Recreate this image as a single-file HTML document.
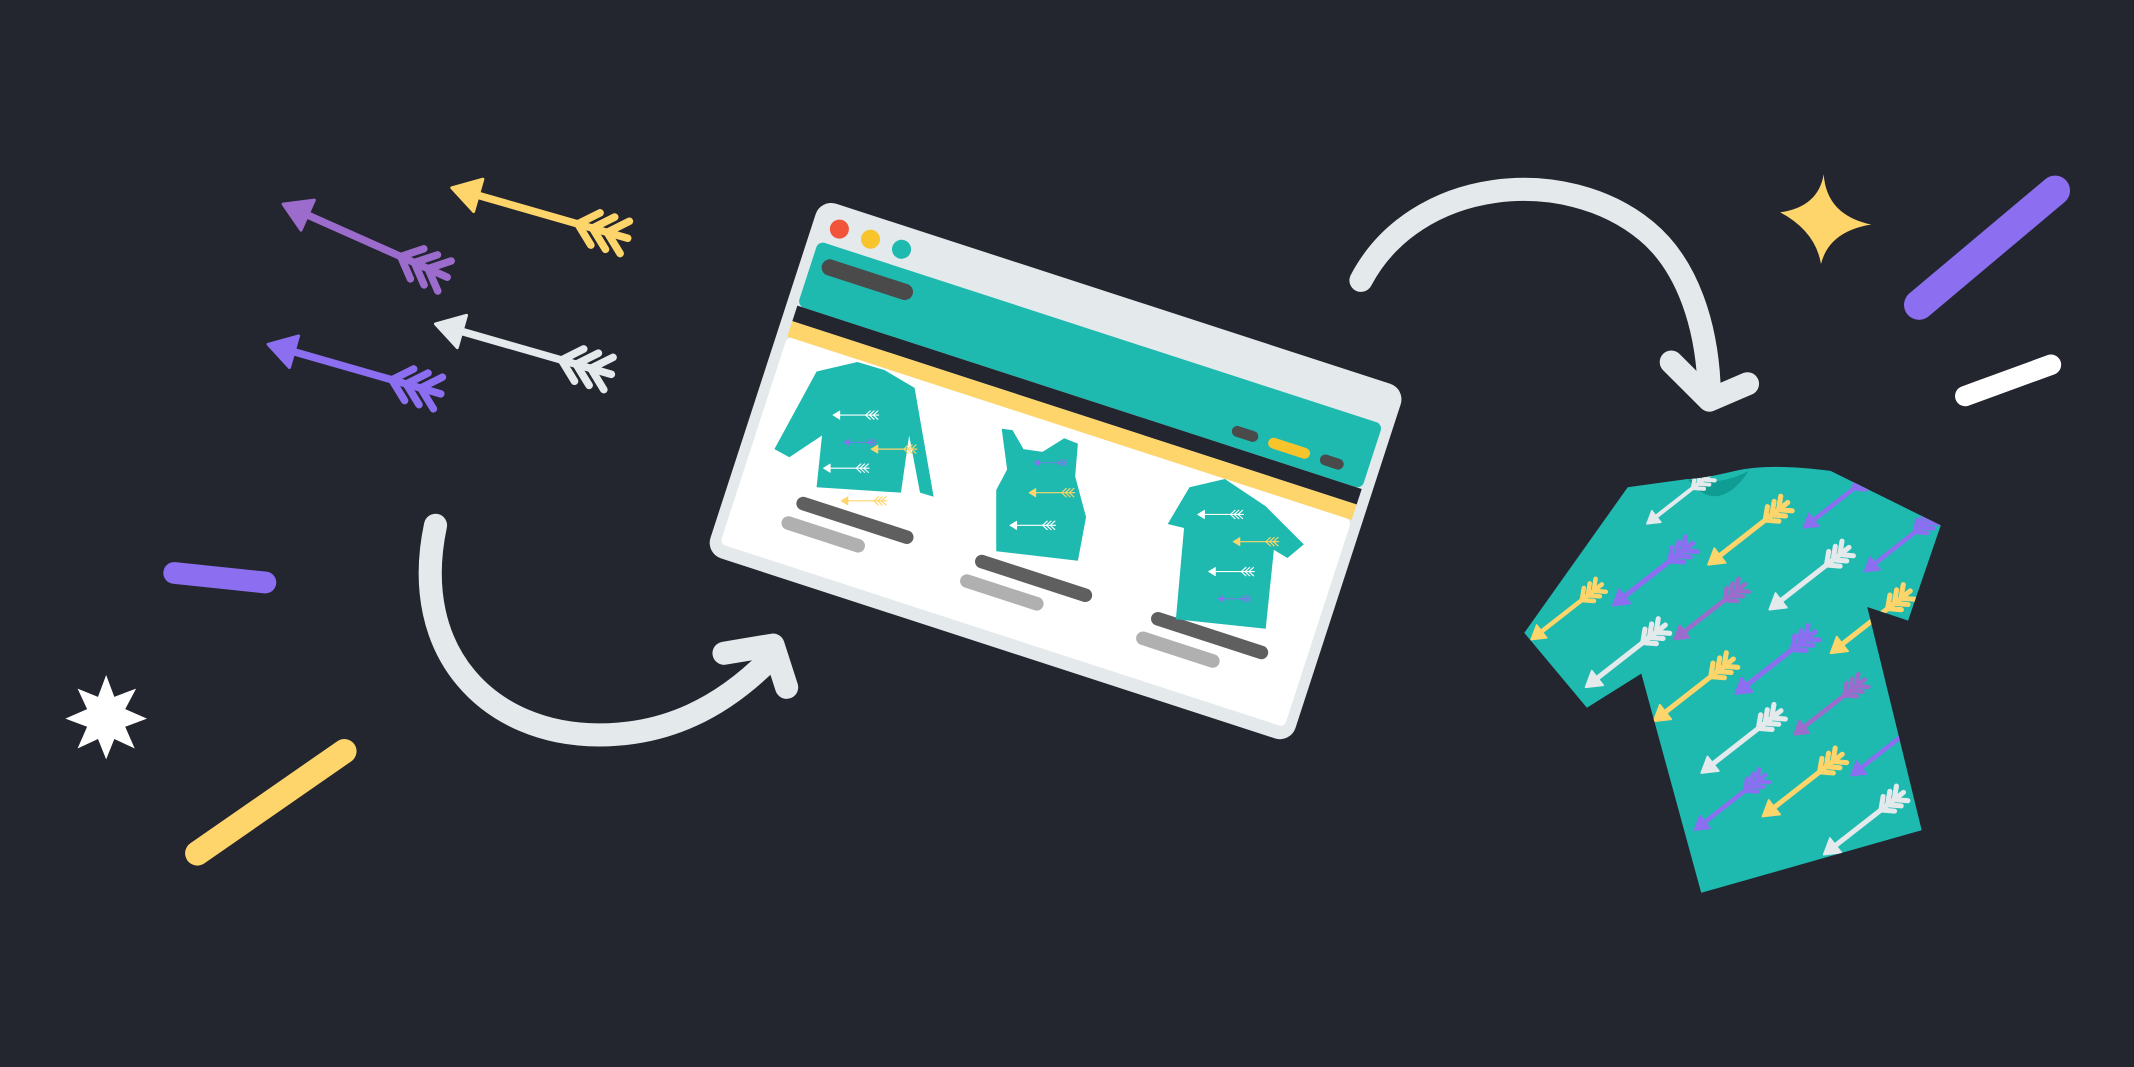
<!DOCTYPE html>
<html><head><meta charset="utf-8"><style>
html,body{margin:0;padding:0;background:#23252f;overflow:hidden}
svg{display:block}
</style></head><body>
<svg width="2134" height="1067" viewBox="0 0 1568 784" xmlns="http://www.w3.org/2000/svg">
<defs>
<g id="ar" stroke-linecap="round" stroke-linejoin="round">
<line x1="4" y1="0" x2="120" y2="0" fill="none"/>
<path d="M18,-11 L0,0 L18,11 Z" stroke-width="2"/>
<path fill="none" d="M86,0 L98,-11 M86,0 L98,11 M96,0 L108,-11 M96,0 L108,11 M106,0 L118,-11 M106,0 L118,11"/>
</g>
<clipPath id="tee"><path d="M1196,358 L1120,465 L1166,520 L1206,495 L1250,656 L1412,610 L1372,446 L1402,456 L1426,386 L1345,346 Q1300,340 1275,346 Q1250,352 1240,352 Z"/></clipPath>
</defs>
<rect width="1568" height="784" fill="#23252f"/>

<g stroke="#9c6ccc" fill="#9c6ccc" stroke-width="5"><use href="#ar" transform="translate(208,150) rotate(24) scale(1.1)"/></g>
<g stroke="#fdd56b" fill="#fdd56b" stroke-width="5"><use href="#ar" transform="translate(332,138) rotate(16) scale(1.12)"/></g>
<g stroke="#8b6ff0" fill="#8b6ff0" stroke-width="5"><use href="#ar" transform="translate(197,253) rotate(16) scale(1.1)"/></g>
<g stroke="#e4e9ec" fill="#e4e9ec" stroke-width="5"><use href="#ar" transform="translate(320,238) rotate(16) scale(1.12)"/></g>

<line x1="128" y1="421" x2="195" y2="428" stroke="#8b6ff0" stroke-width="16" stroke-linecap="round"/>
<line x1="145" y1="627" x2="253" y2="552" stroke="#fdd56b" stroke-width="18" stroke-linecap="round"/>
<polygon fill="#fff" points="78,496 84,512 100,506 92,521 108,528 92,534 99,550 84,543 78,558 72,543 57,550 64,534 48,528 64,521 57,506 72,512"/>

<g fill="none" stroke="#e4e9ec" stroke-width="17" stroke-linecap="round" stroke-linejoin="round">
<path d="M320,386 C300,480 360,540 440,540 C490,540 530,520 565,485"/>
<path d="M532,480 L568,474 L578,505"/>
</g>

<g transform="translate(603,146) rotate(18)">
<rect x="0" y="0" width="452" height="274" rx="12" fill="#e4e9ec"/>
<circle cx="20" cy="17" r="7" fill="#f2533b"/>
<circle cx="44" cy="17" r="7" fill="#f8c42b"/>
<circle cx="68" cy="17" r="7" fill="#1ebab0"/>
<rect x="8" y="30" width="436" height="50" rx="5" fill="#1ebab0"/>
<rect x="16" y="40" width="70" height="12" rx="6" fill="#4a4a4a"/>
<rect x="340" y="64" width="20" height="8" rx="4" fill="#4a4a4a"/>
<rect x="368" y="64" width="32" height="8" rx="4" fill="#f8c42b"/>
<rect x="408" y="64" width="18" height="8" rx="4" fill="#4a4a4a"/>
<rect x="8" y="80" width="436" height="12" fill="#23252f"/>
<rect x="8" y="92" width="436" height="12" fill="#fdd56b"/>
<rect x="8" y="104" width="436" height="160" rx="4" fill="#fff"/>
<rect x="52" y="212" width="90" height="10" rx="5" fill="#5f5f5f"/>
<rect x="46" y="229" width="64" height="10" rx="5" fill="#b0b0b0"/>
<rect x="190" y="212" width="90" height="10" rx="5" fill="#5f5f5f"/>
<rect x="184" y="229" width="64" height="10" rx="5" fill="#b0b0b0"/>
<rect x="326" y="212" width="90" height="10" rx="5" fill="#5f5f5f"/>
<rect x="320" y="229" width="64" height="10" rx="5" fill="#b0b0b0"/>
</g>
<path d="M600,273 L630,266 L650,272 L672,285 L686,365 L676,362 L668,320 L662,362 L600,358 L604,320 L580,336 L569,330 Z" fill="#1ebab0"/>
<path d="M736,315 L744,316 L752,330 L766,332 L782,322 L792,326 L790,350 L798,380 L792,412 L732,405 L732,360 L740,345 Z" fill="#1ebab0"/>
<path d="M874,358 L900,352 L930,372 L958,400 L946,410 L936,404 L930,462 L864,455 L870,388 L858,385 Z" fill="#1ebab0"/>
<g stroke-width="3">
<g stroke="#fff" fill="#fff"><use href="#ar" transform="translate(612,305) scale(0.28)"/><use href="#ar" transform="translate(605,344) scale(0.28)"/><use href="#ar" transform="translate(742,386) scale(0.28)"/><use href="#ar" transform="translate(880,378) scale(0.28)"/><use href="#ar" transform="translate(888,420) scale(0.28)"/></g>
<g stroke="#fdd56b" fill="#fdd56b"><use href="#ar" transform="translate(640,330) scale(0.28)"/><use href="#ar" transform="translate(618,368) scale(0.28)"/><use href="#ar" transform="translate(756,362) scale(0.28)"/><use href="#ar" transform="translate(906,398) scale(0.28)"/></g>
<g stroke="#8b6ff0" fill="#8b6ff0"><use href="#ar" transform="translate(620,325) scale(0.2)"/><use href="#ar" transform="translate(760,340) scale(0.2)"/><use href="#ar" transform="translate(895,440) scale(0.2)"/></g>
</g>

<g fill="none" stroke="#e4e9ec" stroke-width="17" stroke-linecap="round" stroke-linejoin="round">
<path d="M1000,206 C1040,130 1150,120 1210,170 C1240,195 1255,240 1256,290"/>
<path d="M1228,266 L1256,294 L1284,282"/>
</g>

<path d="M1340,128 Q1342,158 1375,165 Q1344,170 1338,194 Q1334,170 1308,156 Q1336,152 1340,128 Z" fill="#fdd56b"/>
<line x1="1410" y1="224" x2="1510" y2="140" stroke="#8b6ff0" stroke-width="22" stroke-linecap="round"/>
<line x1="1444" y1="291" x2="1507" y2="268" stroke="#fff" stroke-width="15" stroke-linecap="round"/>

<path d="M1196,358 L1120,465 L1166,520 L1206,495 L1250,656 L1412,610 L1372,446 L1402,456 L1426,386 L1345,346 Q1300,340 1275,346 Q1250,352 1240,352 Z" fill="#1ebab0"/>
<path d="M1240,352 Q1262,380 1285,346 Q1262,358 1240,352 Z" fill="#0e9c93"/>
<g clip-path="url(#tee)" stroke-width="6">
<g stroke="#e4e9ec" fill="#e4e9ec">
<use href="#ar" transform="translate(1210,385) rotate(-38) scale(0.5)"/>
<use href="#ar" transform="translate(1300,448) rotate(-38) scale(0.62)"/>
<use href="#ar" transform="translate(1165,505) rotate(-38) scale(0.62)"/>
<use href="#ar" transform="translate(1250,568) rotate(-38) scale(0.62)"/>
<use href="#ar" transform="translate(1340,628) rotate(-38) scale(0.62)"/>
</g>
<g stroke="#fdd56b" fill="#fdd56b">
<use href="#ar" transform="translate(1255,415) rotate(-38) scale(0.62)"/>
<use href="#ar" transform="translate(1125,470) rotate(-38) scale(0.55)"/>
<use href="#ar" transform="translate(1215,530) rotate(-38) scale(0.62)"/>
<use href="#ar" transform="translate(1345,480) rotate(-38) scale(0.62)"/>
<use href="#ar" transform="translate(1295,600) rotate(-38) scale(0.62)"/>
</g>
<g stroke="#8b6ff0" fill="#8b6ff0">
<use href="#ar" transform="translate(1325,388) rotate(-38) scale(0.55)"/>
<use href="#ar" transform="translate(1185,445) rotate(-38) scale(0.62)"/>
<use href="#ar" transform="translate(1370,420) rotate(-38) scale(0.55)"/>
<use href="#ar" transform="translate(1275,510) rotate(-38) scale(0.62)"/>
<use href="#ar" transform="translate(1245,610) rotate(-38) scale(0.55)"/>
<use href="#ar" transform="translate(1360,570) rotate(-38) scale(0.55)"/>
</g>
<g stroke="#9c6ccc" fill="#9c6ccc">
<use href="#ar" transform="translate(1230,470) rotate(-38) scale(0.55)"/>
<use href="#ar" transform="translate(1318,540) rotate(-38) scale(0.55)"/>
</g>
</g>
</svg>
</body></html>
